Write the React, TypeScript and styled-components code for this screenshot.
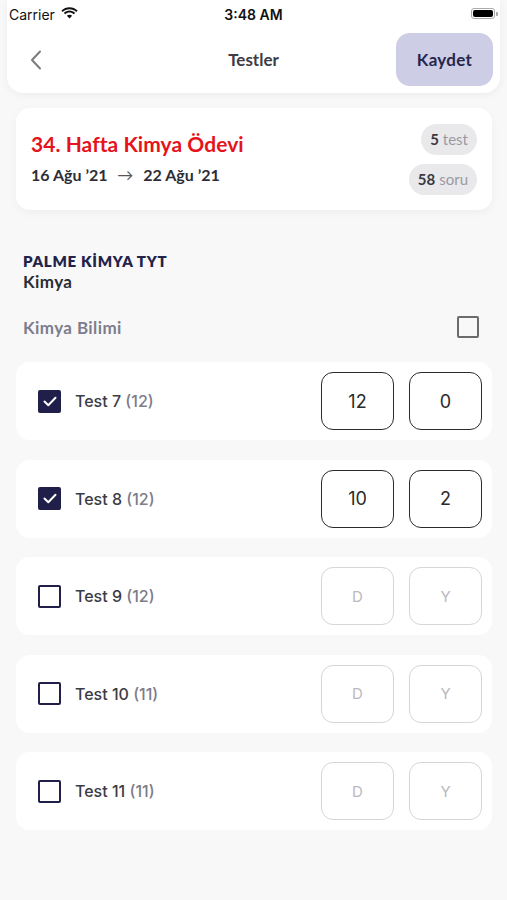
import React from "react";
import styled, { createGlobalStyle } from "styled-components";

const GlobalStyle = createGlobalStyle`
  body {
    margin: 0;
    background: #f8f8f9;
    font-family: "Lato", "Noto Sans", sans-serif;
  }
`;

type TestItem = {
  name: string;
  count: number;
  checked: boolean;
  d?: string;
  y?: string;
};

const tests: TestItem[] = [
  { name: "Test 7", count: 12, checked: true, d: "12", y: "0" },
  { name: "Test 8", count: 12, checked: true, d: "10", y: "2" },
  { name: "Test 9", count: 12, checked: false },
  { name: "Test 10", count: 11, checked: false },
  { name: "Test 11", count: 11, checked: false },
];

function App() {
  return (
    <Page>
      <GlobalStyle />
      <Header>
        <StatusBar>
          <Carrier>
            Carrier
            <svg width="17" height="12" viewBox="0 0 17 12">
              <path d="M8.5 2.2c2.6 0 5 1 6.8 2.7l1.3-1.4C14.4 1.4 11.6.2 8.5.2S2.6 1.4.4 3.5l1.3 1.4C3.5 3.2 5.9 2.2 8.5 2.2z" fill="#111" />
              <path d="M8.5 5.6c1.6 0 3.1.6 4.3 1.7l1.3-1.4C12.6 4.5 10.6 3.6 8.5 3.6S4.4 4.5 2.9 5.9l1.3 1.4C5.4 6.2 6.9 5.6 8.5 5.6z" fill="#111" />
              <path d="M8.5 11.6l2.6-2.8c-.7-.6-1.6-1-2.6-1s-1.9.4-2.6 1z" fill="#111" />
            </svg>
          </Carrier>
          <Clock>3:48 AM</Clock>
          <Battery>
            <BatteryBody>
              <BatteryFill />
            </BatteryBody>
            <BatteryCap />
          </Battery>
        </StatusBar>
        <NavBar>
          <BackButton>
            <svg width="14" height="22" viewBox="0 0 14 22">
              <path d="M11 2.5L3 11l8 8.5" stroke="#7b7b80" strokeWidth="2" fill="none" strokeLinecap="round" strokeLinejoin="round" />
            </svg>
          </BackButton>
          <NavTitle>Testler</NavTitle>
          <SaveButton>Kaydet</SaveButton>
        </NavBar>
      </Header>

      <HomeworkCard>
        <HomeworkInfo>
          <HomeworkTitle>34. Hafta Kimya Ödevi</HomeworkTitle>
          <DateRange>
            16 Ağu ’21 <Arrow>→</Arrow> 22 Ağu ’21
          </DateRange>
        </HomeworkInfo>
        <Pills>
          <Pill>
            <b>5</b> test
          </Pill>
          <Pill>
            <b>58</b> soru
          </Pill>
        </Pills>
      </HomeworkCard>

      <Section>
        <Publisher>PALME KİMYA TYT</Publisher>
        <Subject>Kimya</Subject>
        <TopicRow>
          <Topic>Kimya Bilimi</Topic>
          <TopicCheck />
        </TopicRow>
      </Section>

      <TestList>
        {tests.map((t) => (
          <TestRow key={t.name}>
            <Check checked={t.checked}>
              {t.checked && (
                <svg width="14" height="11" viewBox="0 0 14 11">
                  <path d="M1.5 5.5l3.8 3.8L12.5 1.8" stroke="#fff" strokeWidth="2" fill="none" strokeLinecap="round" strokeLinejoin="round" />
                </svg>
              )}
            </Check>
            <TestLabel>
              {t.name} <Count>({t.count})</Count>
            </TestLabel>
            <Inputs>
              <AnswerBox filled={!!t.d}>{t.d ?? "D"}</AnswerBox>
              <AnswerBox filled={!!t.y}>{t.y ?? "Y"}</AnswerBox>
            </Inputs>
          </TestRow>
        ))}
      </TestList>
    </Page>
  );
}

const Page = styled.div`
  width: 507px;
  min-height: 900px;
  background: #f8f8f9;
`;

const Header = styled.div`
  margin: 0 7px;
  background: #fff;
  border-radius: 0 0 16px 16px;
  box-shadow: 0 2px 8px rgba(0, 0, 0, 0.05);
`;

const StatusBar = styled.div`
  height: 28px;
  display: flex;
  align-items: center;
  justify-content: space-between;
  padding: 0 2px 0 2px;
  font-family: "Inter", "Liberation Sans", sans-serif;
  font-size: 14px;
  color: #111;
  position: relative;
`;

const Carrier = styled.div`
  display: flex;
  align-items: center;
  gap: 6px;
  svg {
    margin-top: -2px;
  }
`;

const Clock = styled.div`
  font-weight: 600;
  position: absolute;
  left: 0;
  right: 0;
  text-align: center;
  pointer-events: none;
`;

const Battery = styled.div`
  display: flex;
  align-items: center;
  margin-top: -1px;
`;

const BatteryBody = styled.div`
  width: 24px;
  height: 11px;
  border: 1px solid #aaa;
  border-radius: 3px;
  padding: 1px;
  box-sizing: border-box;
  display: flex;
`;

const BatteryFill = styled.div`
  flex: 1;
  background: #000;
  border-radius: 2px;
`;

const BatteryCap = styled.div`
  width: 2px;
  height: 4px;
  background: #aaa;
  border-radius: 0 1px 1px 0;
  margin-left: 1px;
`;

const NavBar = styled.div`
  height: 65px;
  display: flex;
  align-items: center;
  justify-content: space-between;
  padding: 0 7px 2px 22px;
  box-sizing: border-box;
  position: relative;
`;

const BackButton = styled.div`
  display: flex;
  align-items: center;
  width: 40px;
`;

const NavTitle = styled.div`
  position: absolute;
  left: 0;
  right: 0;
  top: 0;
  bottom: 3px;
  display: flex;
  align-items: center;
  justify-content: center;
  font-size: 17px;
  font-weight: 700;
  color: #3d3d45;
  pointer-events: none;
`;

const SaveButton = styled.button`
  width: 97px;
  height: 53px;
  border: none;
  border-radius: 14px;
  background: #cecde6;
  color: #27264d;
  font-family: "Lato", "Noto Sans", sans-serif;
  font-size: 17px;
  font-weight: 700;
  letter-spacing: 0.3px;
`;

const HomeworkCard = styled.div`
  margin: 15px 15px 0 16px;
  height: 102px;
  box-sizing: border-box;
  background: #fff;
  border-radius: 14px;
  box-shadow: 0 3px 10px rgba(0, 0, 0, 0.04);
  display: flex;
  align-items: center;
  justify-content: space-between;
  padding: 0 15px 0 15px;
`;

const HomeworkInfo = styled.div`
  display: flex;
  flex-direction: column;
  gap: 9px;
  margin-top: -3px;
`;

const HomeworkTitle = styled.div`
  color: #e5131c;
  font-size: 21px;
  font-weight: 700;
  letter-spacing: 0.05px;
`;

const DateRange = styled.div`
  color: #2e2e36;
  font-size: 16px;
  font-weight: 700;
`;

const Arrow = styled.span`
  color: #555;
  font-weight: 400;
  margin: 0 6px;
`;

const Pills = styled.div`
  display: flex;
  flex-direction: column;
  align-items: flex-end;
  gap: 9px;
`;

const Pill = styled.div`
  height: 31px;
  padding: 0 9px;
  border-radius: 16px;
  background: #e9e9ec;
  display: flex;
  align-items: center;
  gap: 4px;
  font-size: 15px;
  color: #9a9aa3;
  b {
    color: #3a3a42;
    font-weight: 700;
  }
`;

const Section = styled.div`
  padding: 42px 28px 0 23px;
`;

const Publisher = styled.div`
  font-size: 15px;
  font-weight: 800;
  color: #23234a;
  letter-spacing: 0.7px;
`;

const Subject = styled.div`
  font-size: 17px;
  font-weight: 700;
  color: #2c2c34;
  margin-top: 1px;
  letter-spacing: 0.4px;
`;

const TopicRow = styled.div`
  display: flex;
  align-items: center;
  justify-content: space-between;
  margin-top: 24px;
`;

const Topic = styled.div`
  font-size: 17px;
  font-weight: 700;
  color: #7d7d8c;
  letter-spacing: 0.4px;
`;

const TopicCheck = styled.div`
  width: 22px;
  height: 22px;
  box-sizing: border-box;
  border: 2px solid #6b6b6b;
  border-radius: 2px;
`;

const TestList = styled.div`
  display: flex;
  flex-direction: column;
  gap: 19.5px;
  margin: 24px 15px 0 16px;
`;

const TestRow = styled.div`
  height: 78px;
  background: #fff;
  border-radius: 14px;
  display: flex;
  align-items: center;
  padding: 0 10px 0 22px;
`;

const Check = styled.div<{ checked: boolean }>`
  width: 23px;
  height: 23px;
  box-sizing: border-box;
  border-radius: 2px;
  border: 2px solid #1f1f4a;
  background: ${(p) => (p.checked ? "#1f1f4a" : "transparent")};
  display: flex;
  align-items: center;
  justify-content: center;
`;

const TestLabel = styled.div`
  margin-left: 14px;
  flex: 1;
  font-family: "Inter", "Liberation Sans", sans-serif;
  font-size: 16px;
  font-weight: 500;
  color: #3c3c44;
`;

const Count = styled.span`
  color: #7c7c8a;
`;

const Inputs = styled.div`
  display: flex;
  gap: 15px;
`;

const AnswerBox = styled.div<{ filled: boolean }>`
  width: 73px;
  height: 58px;
  box-sizing: border-box;
  border-radius: 12px;
  border: 1.5px solid ${(p) => (p.filled ? "#2a2a2a" : "#d6d6d9")};
  display: flex;
  align-items: center;
  justify-content: center;
  font-family: "Inter", "Liberation Sans", sans-serif;
  font-size: ${(p) => (p.filled ? "18px" : "15px")};
  color: ${(p) => (p.filled ? "#2a2a2a" : "#b9b9be")};
`;

export default App;
